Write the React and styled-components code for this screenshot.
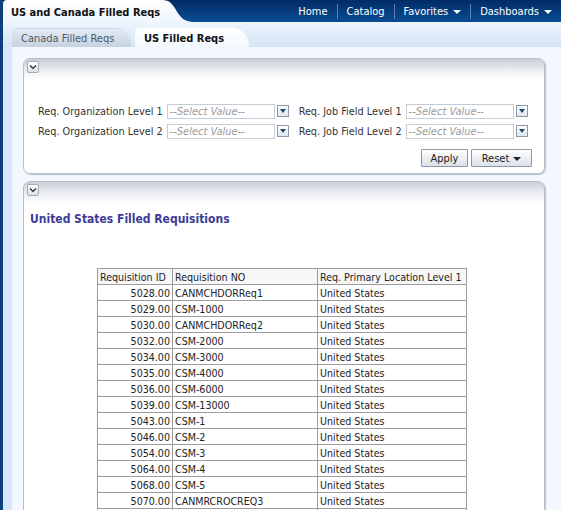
import React from "react";
import styled, { createGlobalStyle } from "styled-components";

const Global = createGlobalStyle`
  html, body { margin: 0; padding: 0; overflow: hidden; width: 561px; height: 510px; }
  body { font-family: "DejaVu Sans Condensed", "DejaVu Sans", sans-serif; font-stretch: condensed; font-size: 11px; color: #333; }
  * { box-sizing: border-box; }
`;

const Page = styled.div`
  width: 561px;
  height: 510px;
  display: flex;
  flex-direction: column;
  border-left: 3px solid #0b3f7e;
  background: #d8e7f8;
  overflow: hidden;
`;

const TopBar = styled.div`
  height: 22px;
  flex: none;
  display: flex;
  justify-content: space-between;
  align-items: stretch;
  background: linear-gradient(#002c66, #0a4c92);
`;

const MainTabWrap = styled.div`
  display: flex;
  align-items: stretch;
`;

const MainTab = styled.div`
  display: flex;
  align-items: center;
  padding: 3px 0 0 8px;
  font-weight: bold;
  font-size: 11px;
  color: #111;
  background: linear-gradient(#ffffff, #eef5fd);
  border-top-left-radius: 4px;
`;

const Swoosh = styled.svg`
  display: block;
  width: 34px;
  height: 22px;
`;

const Nav = styled.nav`
  display: flex;
  align-items: center;
  padding-right: 0;
`;

const NavItem = styled.span`
  color: #fff;
  font-size: 11px;
  display: flex;
  align-items: center;
  gap: 5px;
  padding: 0 9px;
  height: 15px;
  border-left: ${(p) => (p.$first ? "none" : "1px solid #5c82b4")};
`;

const Caret = styled.span`
  width: 0;
  height: 0;
  border-left: 4px solid transparent;
  border-right: 4px solid transparent;
  border-top: 4px solid ${(p) => p.$color || "#fff"};
  margin-top: 2px;
`;

const Body = styled.div`
  flex: 1;
  display: flex;
  flex-direction: column;
  padding-left: 9px;
  background: linear-gradient(#eef5fd 0px, #d4e4f6 25px, #d8e7f8 26px);
`;

const TabStrip = styled.div`
  height: 25px;
  flex: none;
  display: flex;
  align-items: flex-end;
  gap: 4px;
`;

const SubTab = styled.div`
  height: 19px;
  display: flex;
  align-items: center;
  padding: 1px 0 0 9px;
  width: ${(p) => p.$w}px;
  font-size: 11px;
  border-top-left-radius: 4px;
  border-top-right-radius: 16px 19px;
  color: ${(p) => (p.$active ? "#111" : "#4d5a68")};
  font-weight: ${(p) => (p.$active ? "bold" : "normal")};
  background: ${(p) =>
    p.$active ? "linear-gradient(#ffffff, #f3f8fe)" : "linear-gradient(#e3eaf3, #c6d2e0)"};
  border-top: 1px solid ${(p) => (p.$active ? "#ffffff" : "#cdd6e2")};
`;

const Frame = styled.div`
  flex: 1;
  background: #f3f8fe;
  padding: 11px 16px 0 11px;
  display: flex;
  flex-direction: column;
  gap: 7px;
`;

const Panel = styled.section`
  border: 1px solid #b9bfc8;
  border-radius: 7px;
  box-shadow: 1px 1px 1px rgba(80, 90, 110, 0.35);
  height: ${(p) => (p.$h ? p.$h + "px" : "auto")};
  flex: ${(p) => (p.$grow ? 1 : "none")};
  display: flex;
  flex-direction: column;
  background: linear-gradient(#c8ced7 0px, #eef0f3 12px, #ffffff 22px);
`;

const PanelHead = styled.div`
  height: 14px;
  padding: 2px 0 0 3px;
  flex: none;
`;

const Collapse = styled.div`
  width: 12px;
  height: 12px;
  border: 1px solid #a3aab4;
  border-radius: 2px;
  background: linear-gradient(#ffffff, #dde2e8);
  display: flex;
  align-items: center;
  justify-content: center;
`;

const Prompts = styled.div`
  padding: 31px 0 0 14px;
  display: grid;
  grid-template-columns: auto auto;
  column-gap: 10px;
  row-gap: 6px;
  justify-content: start;
`;

const Field = styled.div`
  display: flex;
  align-items: center;
  justify-content: flex-end;
  height: 14px;
`;

const Label = styled.span`
  color: #333;
  font-size: 10.8px;
  margin-right: 4px;
  white-space: nowrap;
`;

const Select = styled.div`
  width: 108px;
  height: 15px;
  border: 1px solid #c4ccd6;
  background: #fff;
  color: #9a9a9a;
  font-style: italic;
  font-size: 11px;
  line-height: 13px;
  padding-left: 2px;
`;

const DropBtn = styled.div`
  width: 12px;
  height: 12px;
  margin-left: 2px;
  border: 1px solid #8d98a6;
  background: linear-gradient(#ffffff, #dfe6ee);
  display: flex;
  align-items: center;
  justify-content: center;
`;

const Tri = styled.span`
  width: 0;
  height: 0;
  border-left: 3px solid transparent;
  border-right: 3px solid transparent;
  border-top: 4px solid #1d4a6e;
`;

const ButtonRow = styled.div`
  display: flex;
  justify-content: flex-end;
  gap: 3px;
  padding: 11px 12px 0 0;
`;

const Button = styled.div`
  height: 18px;
  width: ${(p) => p.$w}px;
  border: 1px solid #8e97a3;
  border-radius: 1px;
  background: linear-gradient(#ffffff, #dae1e9);
  font-size: 11px;
  color: #222;
  display: flex;
  align-items: center;
  justify-content: center;
  gap: 4px;
`;

const Title = styled.h2`
  margin: 16px 0 0 6px;
  font-size: 12px;
  font-weight: bold;
  color: #3b3c97;
`;

const TableWrap = styled.div`
  display: flex;
  justify-content: center;
  padding: 42px 0 0 0;
  margin-left: -4px;
`;

const Table = styled.table`
  width: 369px;
  border-collapse: collapse;
  font-size: 10.6px;
  color: #222;
  table-layout: fixed;
`;

const Th = styled.th`
  font-weight: normal;
  text-align: left;
  height: 16px;
  padding: 0 2px;
  border: 1px solid #9c9c9c;
  background: #f7f7f7;
  white-space: nowrap;
  overflow: hidden;
  line-height: 14px;
`;

const Td = styled.td`
  height: 16px;
  padding: 0 2px;
  border: 1px solid #9c9c9c;
  text-align: ${(p) => (p.$num ? "right" : "left")};
  white-space: nowrap;
  line-height: 14px;
`;

const rows = [
  ["5028.00", "CANMCHDORReq1"],
  ["5029.00", "CSM-1000"],
  ["5030.00", "CANMCHDORReq2"],
  ["5032.00", "CSM-2000"],
  ["5034.00", "CSM-3000"],
  ["5035.00", "CSM-4000"],
  ["5036.00", "CSM-6000"],
  ["5039.00", "CSM-13000"],
  ["5043.00", "CSM-1"],
  ["5046.00", "CSM-2"],
  ["5054.00", "CSM-3"],
  ["5064.00", "CSM-4"],
  ["5068.00", "CSM-5"],
  ["5070.00", "CANMRCROCREQ3"],
  ["5071.00", "CSM-6"],
];

const Chevron = () => (
  <svg width="8" height="6" viewBox="0 0 8 6">
    <path d="M1 1.5 L4 4.5 L7 1.5" fill="none" stroke="#222" strokeWidth="1.1" />
  </svg>
);

const Prompt = ({ label }) => (
  <Field>
    <Label>{label}</Label>
    <Select>--Select Value--</Select>
    <DropBtn>
      <Tri />
    </DropBtn>
  </Field>
);

export default function App() {
  return (
    <>
      <Global />
      <Page>
        <TopBar>
          <MainTabWrap>
            <MainTab>US and Canada Filled Reqs</MainTab>
            <Swoosh viewBox="0 0 34 22" preserveAspectRatio="none">
              <defs>
                <linearGradient id="mt" x1="0" y1="0" x2="0" y2="1">
                  <stop offset="0" stopColor="#ffffff" />
                  <stop offset="1" stopColor="#eef5fd" />
                </linearGradient>
              </defs>
              <path d="M0 0 L2 0 C10 0 12 4 16 10 C20 17 24 22 34 22 L0 22 Z" fill="url(#mt)" />
            </Swoosh>
          </MainTabWrap>
          <Nav>
            <NavItem $first>Home</NavItem>
            <NavItem>Catalog</NavItem>
            <NavItem>
              Favorites <Caret />
            </NavItem>
            <NavItem>
              Dashboards <Caret />
            </NavItem>
          </Nav>
        </TopBar>
        <Body>
          <TabStrip>
            <SubTab $w={119}>Canada Filled Reqs</SubTab>
            <SubTab $w={114} $active>
              US Filled Reqs
            </SubTab>
          </TabStrip>
          <Frame>
            <Panel $h={116}>
              <PanelHead>
                <Collapse>
                  <Chevron />
                </Collapse>
              </PanelHead>
              <Prompts>
                <Prompt label="Req. Organization Level 1" />
                <Prompt label="Req. Job Field Level 1" />
                <Prompt label="Req. Organization Level 2" />
                <Prompt label="Req. Job Field Level 2" />
              </Prompts>
              <ButtonRow>
                <Button $w={47}>Apply</Button>
                <Button $w={61}>
                  Reset <Caret $color="#222" />
                </Button>
              </ButtonRow>
            </Panel>
            <Panel $grow>
              <PanelHead>
                <Collapse>
                  <Chevron />
                </Collapse>
              </PanelHead>
              <Title>United States Filled Requisitions</Title>
              <TableWrap>
                <Table>
                  <colgroup>
                    <col style={{ width: 75 }} />
                    <col style={{ width: 145 }} />
                    <col style={{ width: 149 }} />
                  </colgroup>
                  <thead>
                    <tr>
                      <Th>Requisition ID</Th>
                      <Th>Requisition NO</Th>
                      <Th>Req. Primary Location Level 1</Th>
                    </tr>
                  </thead>
                  <tbody>
                    {rows.map(([id, no]) => (
                      <tr key={id}>
                        <Td $num>{id}</Td>
                        <Td>{no}</Td>
                        <Td>United States</Td>
                      </tr>
                    ))}
                  </tbody>
                </Table>
              </TableWrap>
            </Panel>
          </Frame>
        </Body>
      </Page>
    </>
  );
}
